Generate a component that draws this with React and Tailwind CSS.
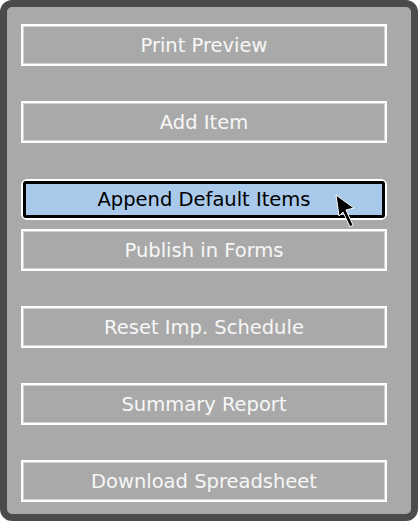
const items = [
  { label: "Print Preview", mt: "mt-0" },
  { label: "Add Item", mt: "mt-[35px]" },
];

const rest = [
  { label: "Reset Imp. Schedule" },
  { label: "Summary Report" },
  { label: "Download Spreadsheet" },
];

function PlainButton({ label, className = "" }) {
  return (
    <button
      className={
        "flex h-[42px] w-[366px] items-center justify-center border-2 border-white pt-[2px] text-[19.5px] text-[#f7f7f7] shadow-[inset_0_0_0_1px_#d2d2d2] " +
        className
      }
    >
      {label}
    </button>
  );
}

function Cursor() {
  return (
    <svg className="absolute left-[312px] top-[13px]" width="22" height="36" viewBox="-1 -1 22 36">
      <polygon
        points="0,0 18,13 10,15 17,30 14,32 7,17 3,21"
        fill="#000"
        stroke="#fff"
        strokeWidth="1"
        strokeLinejoin="round"
      />
    </svg>
  );
}

export default function App() {
  return (
    <div className="w-[418px] h-[526px] bg-white" style={{ fontFamily: '"DejaVu Sans", Verdana, sans-serif' }}>
      <div className="flex h-[521px] w-[418px] flex-col rounded-[12px] border-[7px] border-[#4b4b4b] bg-[#a9a9a9] pl-[14px] pt-[17px]">
        {items.map(it => (
          <PlainButton key={it.label} label={it.label} className={it.mt} />
        ))}

        <div className="relative mt-[36px] h-[41px] w-[366px] rounded-[6px] border-2 border-white">
          <button className="flex h-full w-full items-center justify-center rounded-[3px] border-[3px] border-black bg-[#a8c9ea] pt-[1px] text-[19.5px] text-black">
            Append Default Items
          </button>
          <Cursor />
        </div>

        <PlainButton label="Publish in Forms" className="mt-[9px]" />

        {rest.map(it => (
          <PlainButton key={it.label} label={it.label} className="mt-[35px]" />
        ))}
      </div>
    </div>
  );
}
